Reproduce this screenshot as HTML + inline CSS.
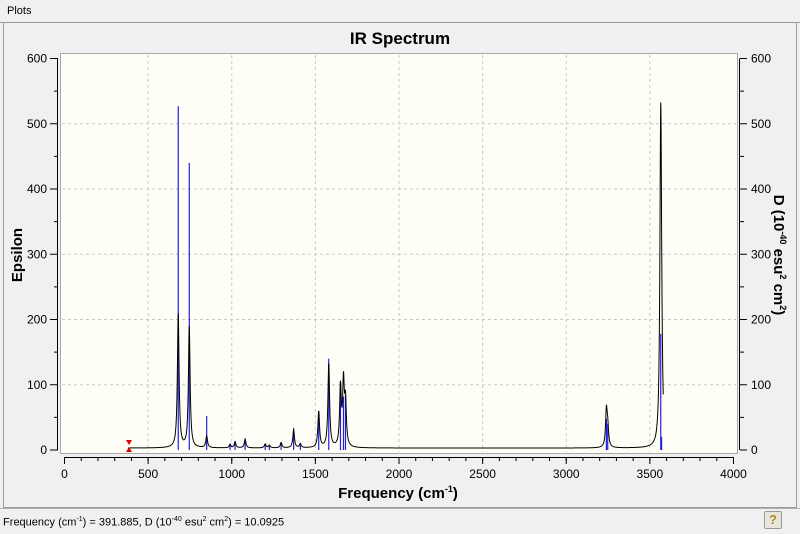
<!DOCTYPE html>
<html><head><meta charset="utf-8"><style>
body{margin:0;width:800px;height:533px;background:#f0f0f0;overflow:hidden;font-family:"Liberation Sans",sans-serif;position:relative}
#hdr{position:absolute;left:0;top:0;width:800px;height:22px;background:#f0f0f0;border-bottom:1px solid #a0a0a0;font-size:11px;line-height:22px}
#hdr span{margin-left:7px}
#panel{position:absolute;left:3px;top:22px;width:792px;height:484px;border:1px solid #9a9a9a;background:#f0f0f0}
#status{position:absolute;left:0;top:508px;width:800px;height:25px;border-top:1px solid #b0b0b0;font-size:11px;line-height:22px}
#help{position:absolute;left:764px;top:511px;width:16px;height:16px;border:1px solid #999;background:#e8e6dc;border-radius:2px;font-weight:bold;color:#b08a20;font-size:13px;text-align:center;line-height:16px}
svg{position:absolute;left:0;top:0}
</style></head><body>
<div id="hdr"><span>Plots</span></div>
<div id="panel"></div>
<div id="status">&nbsp;Frequency (cm<sup style="font-size:7px">-1</sup>) = 391.885, D (10<sup style="font-size:7px">-40</sup> esu<sup style="font-size:7px">2</sup> cm<sup style="font-size:7px">2</sup>) = 10.0925</div>
<div id="help">?</div>
<svg id="s" width="800" height="533" xmlns="http://www.w3.org/2000/svg" font-family="Liberation Sans, sans-serif">
<rect x="60.5" y="53.5" width="677" height="400" fill="#fefef6" stroke="#a8a8a8"/>
<g id="grid" stroke="#c8c8c8" stroke-dasharray="3,3" fill="none"></g>
<g id="ax" stroke="#000" fill="none"></g>
<g id="lbl" font-size="12" fill="#000"></g>
<text x="400" y="44" text-anchor="middle" font-size="17" font-weight="bold">IR Spectrum</text>
<text x="398" y="498" text-anchor="middle" font-size="15" font-weight="bold">Frequency (cm<tspan font-size="9" dy="-6">-1</tspan><tspan dy="6">)</tspan></text>
<text transform="translate(22,255) rotate(-90)" text-anchor="middle" font-size="15" font-weight="bold">Epsilon</text>
<text transform="translate(774,255) rotate(90)" text-anchor="middle" font-size="15" font-weight="bold">D (10<tspan font-size="9" dy="-6">-40</tspan><tspan dy="6"> esu</tspan><tspan font-size="9" dy="-6">2</tspan><tspan dy="6"> cm</tspan><tspan font-size="9" dy="-6">2</tspan><tspan dy="6">)</tspan></text>
<g id="sticks" stroke="#2020e0" stroke-width="1.2"></g>
<path id="spec" fill="none" stroke="#000" stroke-width="1"/>
<polygon points="126,440 132,440 129,445" fill="#e00000"/>
<polygon points="126,452 132,452 129,447" fill="#e00000"/>
</svg>
<script>
var X=function(f){return 64.5+f*0.16725},Y=function(v){return 450-v*0.6525};
var g=document.getElementById('grid'),ax=document.getElementById('ax'),lb=document.getElementById('lbl'),h='',a='',l='';
for(var f=0;f<=4000;f+=500){var x=X(f);if(f>0&&f<4000)h+='<line x1="'+x+'" y1="55" x2="'+x+'" y2="452"/>';l+='<text x="'+x+'" y="478" text-anchor="middle">'+f+'</text>';a+='<line x1="'+x+'" y1="457" x2="'+x+'" y2="464"/>';}
for(f=0;f<=4000;f+=100){x=X(f);a+='<line x1="'+x+'" y1="457" x2="'+x+'" y2="461"/>';}
a+='<line x1="'+X(0)+'" y1="457.5" x2="'+X(4000)+'" y2="457.5"/>';
for(var v=0;v<=600;v+=50){var y=Y(v);if(v%100==0){if(v>0&&v<600)h+='<line x1="62" y1="'+y+'" x2="736" y2="'+y+'"/>';l+='<text x="47" y="'+(y+4)+'" text-anchor="end">'+v+'</text><text x="751" y="'+(y+4)+'">'+v+'</text>';a+='<line x1="50" y1="'+y+'" x2="58" y2="'+y+'"/><line x1="740" y1="'+y+'" x2="747" y2="'+y+'"/>';}else{a+='<line x1="54" y1="'+y+'" x2="58" y2="'+y+'"/><line x1="740" y1="'+y+'" x2="744" y2="'+y+'"/>';}}
a+='<line x1="57.5" y1="'+Y(600)+'" x2="57.5" y2="'+Y(0)+'"/><line x1="739.5" y1="'+Y(600)+'" x2="739.5" y2="'+Y(0)+'"/>';
g.innerHTML=h;ax.innerHTML=a;lb.innerHTML=l;
var P=[[680,205,527],[746,185,440],[850,18,52],[990,5,10],[1020,9,14],[1080,13,18],[1200,6,9],[1225,4,7],[1295,8,12],[1370,27,34],[1410,6,8],[1520,55,60],[1580,128,140],[1650,90,104],[1668,95,82],[1680,65,85],[3240,55,48],[3248,28,40],[3565,500,178],[3570,50,20]];
var st='';P.forEach(function(p){st+='<line x1="'+X(p[0])+'" y1="450" x2="'+X(p[0])+'" y2="'+Y(p[2])+'"/>';});
document.getElementById('sticks').innerHTML=st;
var w=6,d='';for(f=380;f<=3580;f+=1){var s=3;P.forEach(function(p){var t=(f-p[0])/w;s+=p[1]/(1+t*t);});d+=(f==380?'M':'L')+X(f).toFixed(2)+','+Y(s).toFixed(2);}
document.getElementById('spec').setAttribute('d',d);
</script>
</body></html>
